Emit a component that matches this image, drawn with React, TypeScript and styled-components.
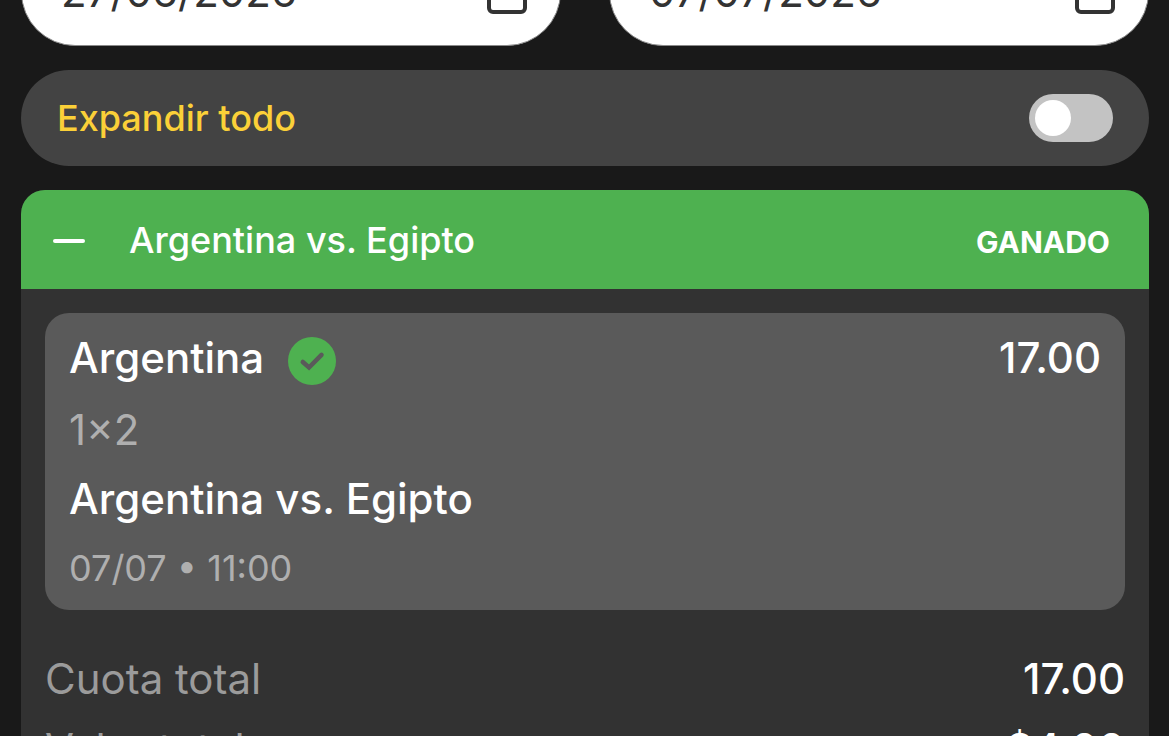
import React, { useId, useState } from 'react';
import styled, { createGlobalStyle } from 'styled-components';

const GlobalStyle = createGlobalStyle`
  * {
    box-sizing: border-box;
  }

  body {
    margin: 0;
    background-color: #191919;
    color: #fff;
    font-family: Inter, Roboto, sans-serif;
    overflow: hidden;
  }
`;

/* the date row is partly scrolled out of the top of the view */
const Page = styled.main`
  display: flex;
  flex-direction: column;
  gap: 24px;
  margin-top: -62px;
  padding: 0 20px 0 21px;
`;

const DateRow = styled.div`
  display: grid;
  grid-template-columns: repeat(2, minmax(0, 1fr));
  gap: 48px;
`;

const DateField = styled.label`
  display: flex;
  align-items: center;
  height: 108px;
  padding: 0 33px 0 39px;
  border: 1px solid #8a8a8a;
  border-radius: 54px;
  background-color: #fff;
`;

const DateInput = styled.input`
  flex: 1 1 auto;
  min-width: 0;
  padding: 0;
  border: none;
  outline: none;
  background-color: transparent;
  color: #333;
  font-family: inherit;
  font-size: 42px;
  line-height: 48px;
`;

const CalendarIcon = styled.svg`
  flex: 0 0 auto;
  width: 40px;
  height: 44px;
`;

const ExpandBar = styled.label`
  display: flex;
  align-items: center;
  justify-content: space-between;
  height: 96px;
  padding: 0 36px;
  border-radius: 48px;
  background-color: #434343;
  color: #fbd038;
  font-size: 36px;
  font-weight: 500;
  line-height: 46px;
`;

const Switch = styled.input`
  appearance: none;
  display: flex;
  width: 84px;
  height: 48px;
  margin: 0;
  padding: 6px;
  border-radius: 24px;
  background-color: #c3c3c3;
  cursor: pointer;

  &::before {
    content: '';
    width: 36px;
    height: 36px;
    border-radius: 50%;
    background-color: #fff;
  }

  &:checked {
    justify-content: flex-end;
    background-color: #4eb150;
  }
`;

const Bet = styled.section`
  border-radius: 24px 24px 0 0;
  background-color: #323232;
  overflow: hidden;
`;

const BetHeader = styled.button`
  display: flex;
  align-items: center;
  width: 100%;
  height: 99px;
  padding: 0 39px 0 30px;
  border: none;
  background-color: #4eb150;
  color: #fff;
  font-family: inherit;
  text-align: left;
  cursor: pointer;
`;

const ToggleIcon = styled.svg`
  width: 36px;
  height: 36px;
  margin-right: 42px;
`;

const BetSummary = styled.span`
  display: flex;
  flex: 1 1 auto;
  align-items: baseline;
  justify-content: space-between;
`;

const BetTitle = styled.span`
  font-size: 36px;
  font-weight: 500;
`;

const BetStatus = styled.span`
  font-size: 30px;
  font-weight: 700;
`;

const BetBody = styled.div`
  padding: 24px;
`;

const Selection = styled.article`
  display: flex;
  flex-direction: column;
  gap: 21px;
  padding: 18px 24px;
  border-radius: 24px;
  background-color: #5a5a5a;
`;

const Outcome = styled.div`
  display: flex;
  height: 54px;
  font-size: 42px;
  font-weight: 500;
  line-height: 54px;
`;

const OutcomeName = styled.span`
  margin-right: 24px;
`;

const WonIcon = styled.svg`
  align-self: flex-end;
  width: 48px;
  height: 48px;
`;

const Odds = styled.span`
  margin-left: auto;
`;

const Line = styled.div<{ $size?: number; $muted?: boolean }>`
  color: ${({ $muted }) => ($muted ? '#afafaf' : '#fff')};
  font-size: ${({ $size = 42 }) => $size}px;
  font-weight: ${({ $muted }) => ($muted ? 400 : 500)};
  line-height: 48px;
`;

const Totals = styled.dl`
  margin: 34px 0 0;
`;

const TotalRow = styled.div`
  display: flex;
  justify-content: space-between;
  font-size: 42px;
  line-height: 70px;
`;

const TotalLabel = styled.dt`
  color: #9b9b9b;
`;

const TotalValue = styled.dd`
  margin: 0;
  font-weight: 500;
`;

const totals = [
  { label: 'Cuota total', value: '17.00' },
  { label: 'Valor total', value: '$4.00' },
];

const DatePicker: React.FC<{ name: string; value: string }> = ({ name, value }) => (
  <DateField>
    <DateInput type="text" aria-label={name} defaultValue={value} />
    <CalendarIcon viewBox="0 0 40 44" fill="none" stroke="#333" strokeWidth="4">
      <rect x="2" y="6" width="36" height="36" rx="4" />
      <path d="M2 16h36M11 0v8M29 0v8" />
    </CalendarIcon>
  </DateField>
);

const App: React.FC = () => {
  const switchId = useId();
  const [expandAll, setExpandAll] = useState(false);
  const [open, setOpen] = useState(true);

  return (
    <>
      <GlobalStyle />
      <Page>
        <DateRow>
          <DatePicker name="Desde" value="27/06/2026" />
          <DatePicker name="Hasta" value="07/07/2026" />
        </DateRow>
        <ExpandBar htmlFor={switchId}>
          Expandir todo
          <Switch
            id={switchId}
            type="checkbox"
            role="switch"
            checked={expandAll}
            onChange={(e) => setExpandAll(e.target.checked)}
          />
        </ExpandBar>
        <Bet>
          <BetHeader type="button" aria-expanded={open} onClick={() => setOpen(!open)}>
            <ToggleIcon viewBox="0 0 36 36" stroke="#fff" strokeWidth="4" strokeLinecap="round">
              <path d={open ? 'M4 19h28' : 'M4 19h28M18 5v28'} />
            </ToggleIcon>
            <BetSummary>
              <BetTitle>Argentina vs. Egipto</BetTitle>
              <BetStatus>GANADO</BetStatus>
            </BetSummary>
          </BetHeader>
          {open && (
            <BetBody>
              <Selection>
                <Outcome>
                  <OutcomeName>Argentina</OutcomeName>
                  <WonIcon viewBox="0 0 48 48" fill="none">
                    <circle cx="24" cy="24" r="24" fill="#4eb150" />
                    <path
                      d="M14.800 25l6.200 5.500L33.500 17.800"
                      stroke="#5a5a5a"
                      strokeWidth="4.500"
                      strokeLinecap="round"
                    />
                  </WonIcon>
                  <Odds>17.00</Odds>
                </Outcome>
                <Line $muted>1×2</Line>
                <Line>Argentina vs. Egipto</Line>
                <Line $muted $size={36}>07/07 • 11:00</Line>
              </Selection>
              <Totals>
                {totals.map(({ label, value }) => (
                  <TotalRow key={label}>
                    <TotalLabel>{label}</TotalLabel>
                    <TotalValue>{value}</TotalValue>
                  </TotalRow>
                ))}
              </Totals>
            </BetBody>
          )}
        </Bet>
      </Page>
    </>
  );
};

export default App;
